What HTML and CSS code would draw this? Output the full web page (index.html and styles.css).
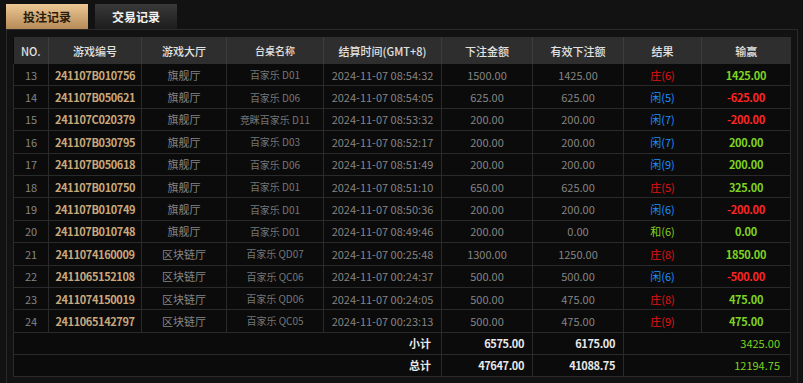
FILE: index.html
```html
<!DOCTYPE html>
<html lang="zh-CN">
<head>
<meta charset="utf-8">
<title>投注记录</title>
<link rel="stylesheet" href="styles.css">
</head>
<body>
<div class="page">
  <div class="tabs">
    <div class="tab tab-active">投注记录</div>
    <div class="tab">交易记录</div>
  </div>
  <div class="panel">
    <table class="records">
      <colgroup>
        <col class="c-no"><col class="c-id"><col class="c-hall"><col class="c-table"><col class="c-time"><col class="c-bet"><col class="c-valid"><col class="c-res"><col class="c-win">
      </colgroup>
      <thead>
        <tr><th>NO.</th><th>游戏编号</th><th>游戏大厅</th><th class="small">台桌名称</th><th>结算时间(GMT+8)</th><th>下注金额</th><th>有效下注额</th><th>结果</th><th>输赢</th></tr>
      </thead>
      <tbody>
        <tr><td>13</td><td class="gid">241107B010756</td><td>旗舰厅</td><td class="tname">百家乐 D01</td><td>2024-11-07 08:54:32</td><td>1500.00</td><td>1425.00</td><td class="r-b">庄(6)</td><td class="win">1425.00</td></tr>
        <tr><td>14</td><td class="gid">241107B050621</td><td>旗舰厅</td><td class="tname">百家乐 D06</td><td>2024-11-07 08:54:05</td><td>625.00</td><td>625.00</td><td class="r-p">闲(5)</td><td class="loss">-625.00</td></tr>
        <tr><td>15</td><td class="gid">241107C020379</td><td>旗舰厅</td><td class="tname">竞眯百家乐 D11</td><td>2024-11-07 08:53:32</td><td>200.00</td><td>200.00</td><td class="r-p">闲(7)</td><td class="loss">-200.00</td></tr>
        <tr><td>16</td><td class="gid">241107B030795</td><td>旗舰厅</td><td class="tname">百家乐 D03</td><td>2024-11-07 08:52:17</td><td>200.00</td><td>200.00</td><td class="r-p">闲(7)</td><td class="win">200.00</td></tr>
        <tr><td>17</td><td class="gid">241107B050618</td><td>旗舰厅</td><td class="tname">百家乐 D06</td><td>2024-11-07 08:51:49</td><td>200.00</td><td>200.00</td><td class="r-p">闲(9)</td><td class="win">200.00</td></tr>
        <tr><td>18</td><td class="gid">241107B010750</td><td>旗舰厅</td><td class="tname">百家乐 D01</td><td>2024-11-07 08:51:10</td><td>650.00</td><td>625.00</td><td class="r-b">庄(5)</td><td class="win">325.00</td></tr>
        <tr><td>19</td><td class="gid">241107B010749</td><td>旗舰厅</td><td class="tname">百家乐 D01</td><td>2024-11-07 08:50:36</td><td>200.00</td><td>200.00</td><td class="r-p">闲(6)</td><td class="loss">-200.00</td></tr>
        <tr><td>20</td><td class="gid">241107B010748</td><td>旗舰厅</td><td class="tname">百家乐 D01</td><td>2024-11-07 08:49:46</td><td>200.00</td><td>0.00</td><td class="r-t">和(6)</td><td class="win">0.00</td></tr>
        <tr><td>21</td><td class="gid">2411074160009</td><td>区块链厅</td><td class="tname">百家乐 QD07</td><td>2024-11-07 00:25:48</td><td>1300.00</td><td>1250.00</td><td class="r-b">庄(8)</td><td class="win">1850.00</td></tr>
        <tr><td>22</td><td class="gid">2411065152108</td><td>区块链厅</td><td class="tname">百家乐 QC06</td><td>2024-11-07 00:24:37</td><td>500.00</td><td>500.00</td><td class="r-p">闲(6)</td><td class="loss">-500.00</td></tr>
        <tr><td>23</td><td class="gid">2411074150019</td><td>区块链厅</td><td class="tname">百家乐 QD06</td><td>2024-11-07 00:24:05</td><td>500.00</td><td>475.00</td><td class="r-b">庄(8)</td><td class="win">475.00</td></tr>
        <tr><td>24</td><td class="gid">2411065142797</td><td>区块链厅</td><td class="tname">百家乐 QC05</td><td>2024-11-07 00:23:13</td><td>500.00</td><td>475.00</td><td class="r-b">庄(9)</td><td class="win">475.00</td></tr>
      </tbody>
      <tfoot>
        <tr><td colspan="5" class="sum-label">小计</td><td class="sum">6575.00</td><td class="sum">6175.00</td><td colspan="2" class="sum-win">3425.00</td></tr>
        <tr><td colspan="5" class="sum-label">总计</td><td class="sum">47647.00</td><td class="sum">41088.75</td><td colspan="2" class="sum-win">12194.75</td></tr>
      </tfoot>
    </table>
  </div>
</div>
</body>
</html>
```

FILE: styles.css
```css
html, body {
  margin: 0;
  padding: 0;
  background: #121212;
}
body {
  font-family: "Noto Sans CJK SC", "Noto Sans", sans-serif;
  color: #858585;
  height: 383px;
  overflow: hidden;
}
.page {
  padding: 4px 5px 0 6px;
}
.tabs {
  display: flex;
  gap: 7px;
  height: 25px;
}
.tab {
  width: 82px;
  height: 25px;
  line-height: 25px;
  text-align: center;
  font-size: 12px;
  font-weight: bold;
  color: #f2f2f2;
  background: linear-gradient(#3a3939, #1e1d1d);
}
.tab-active {
  color: #2a1c0c;
  background: linear-gradient(#ecc794, #b68b58);
}
.panel {
  border: 1px solid #2a2a2a;
  padding: 7px 7px 0 6px;
  height: 360px;
  box-sizing: border-box;
  background: #121212;
}
.records {
  width: 777px;
  border-collapse: collapse;
  table-layout: fixed;
  background: #0b0b0b;
  font-size: 11px;
}
.c-no { width: 35px; }
.c-id { width: 93px; }
.c-hall { width: 85px; }
.c-table { width: 97px; }
.c-time { width: 118px; }
.c-bet { width: 91px; }
.c-valid { width: 91px; }
.c-res { width: 78px; }
.c-win { width: 89px; }
.records th {
  height: 27px;
  padding: 0;
  background: #2e2e2e;
  color: #e2e2e2;
  font-weight: 500;
  font-size: 11px;
  border-left: 1px solid #3c3c3c;
  text-align: center;
  white-space: nowrap;
}
.records th:first-child { border-left: none; }
.records th.small { font-size: 10px; }
.records td {
  height: 21.4px;
  padding: 0;
  text-align: center;
  border: 1px solid #2a2a2a;
  white-space: nowrap;
}
.records tbody tr:first-child td { border-top: none; }
.records td.gid {
  color: #c9a87c;
  font-weight: 600;
  letter-spacing: -0.4px;
}
.records td.tname {
  font-size: 10px;
  color: #777;
}
.r-b { color: #e31414; }
.r-p { color: #1d8fff; }
.r-t { color: #86cf1c; }
.records td.win {
  color: #7ed321;
  font-weight: bold;
  letter-spacing: -0.3px;
}
.records td.loss {
  color: #ff2424;
  font-weight: bold;
  letter-spacing: -0.3px;
}
.records tfoot td {
  height: 21px;
  text-align: right;
  color: #e8e8e8;
  font-weight: bold;
  letter-spacing: -0.4px;
}
.records td.sum-label { padding-right: 10px; letter-spacing: 0; }
.records td.sum { padding-right: 8px; }
.records td.sum-win {
  padding-right: 10px;
  color: #7ed321;
  font-weight: normal;
  letter-spacing: 0;
}
```
